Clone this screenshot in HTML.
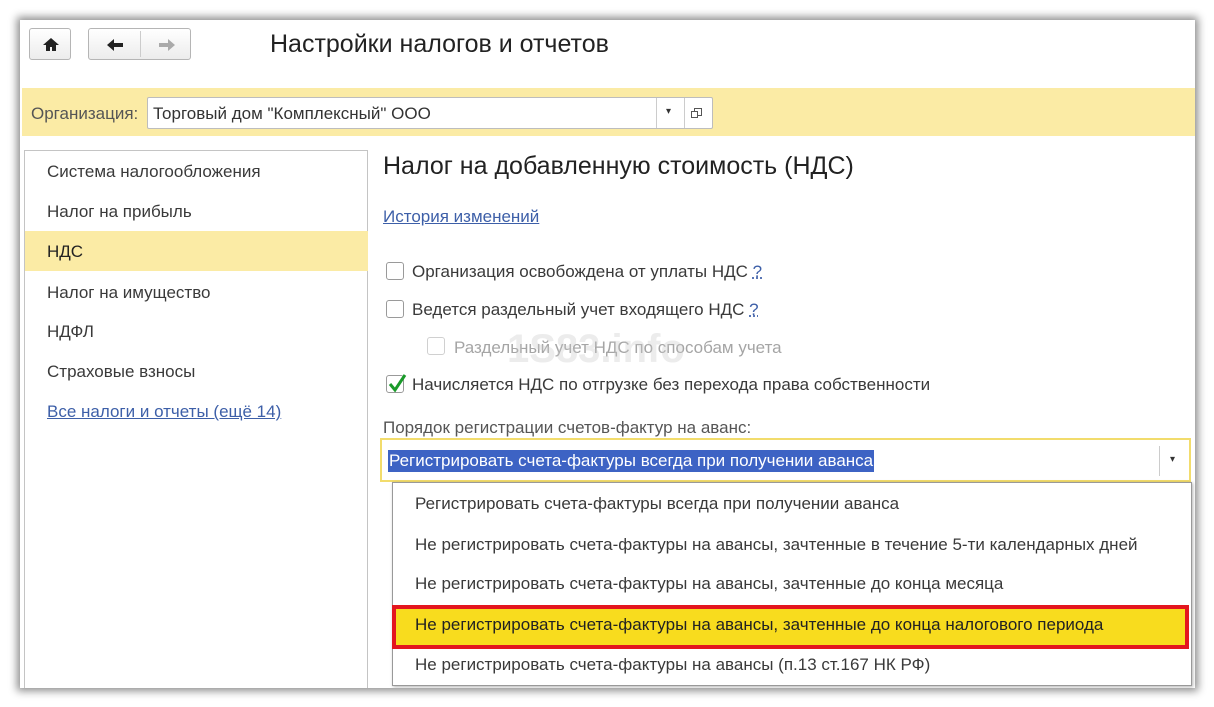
<!DOCTYPE html>
<html><head><meta charset="utf-8">
<style>
*{margin:0;padding:0;box-sizing:border-box}
body{width:1214px;height:707px;background:#fff;font-family:"Liberation Sans",Arial,sans-serif;position:relative;overflow:hidden;color:#333}
.win{position:absolute;left:20px;top:20px;width:1175px;height:668px;background:#fff;box-shadow:0 0 8px 3px rgba(0,0,0,.45);overflow:hidden}
.a{position:absolute;white-space:nowrap}
.btn{position:absolute;border:1px solid #b5b5b5;border-radius:3px;background:linear-gradient(#fff,#ececec)}
.t{font-size:17px;color:#3a3a3a}
.cb{position:absolute;width:18px;height:18px;border:1px solid #9a9a9a;border-radius:3px;background:#fff}
.lnk{color:#3d5fa8;text-decoration:underline}
</style></head><body>
<div class="win">
 <div class="btn" style="left:9px;top:8px;width:42px;height:32px"><svg width="42" height="32" viewBox="0 0 42 32"><path d="M21 9 L13 16 H16 V22 H20 V18 H22 V22 H26 V16 H29 Z" fill="#222"/></svg></div>
 <div class="btn" style="left:68px;top:8px;width:103px;height:32px"><div style="position:absolute;left:51px;top:2px;width:1px;height:26px;background:#ccc"></div>
  <svg width="103" height="32" viewBox="0 0 103 32"><path d="M18 16 L25 10 V14 H34 V18 H25 V22 Z" fill="#222"/><path d="M86 16 L79 10 V14 H70 V18 H79 V22 Z" fill="#aaa"/></svg></div>
 <div class="a" style="left:250px;top:10px;font-size:25px;color:#222">Настройки налогов и отчетов</div>
 <div style="position:absolute;left:2px;top:68px;width:1173px;height:48px;background:#fbeba5"></div>
 <div class="a t" style="left:11px;top:84px;color:#555">Организация:</div>
 <div style="position:absolute;left:127px;top:77px;width:566px;height:32px;background:#fff;border:1px solid #bdbdbd;border-radius:2px">
  <div class="a t" style="left:5px;top:6px;color:#333">Торговый дом "Комплексный" ООО</div>
  <div style="position:absolute;left:508px;top:0;width:1px;height:30px;background:#ccc"></div>
  <div style="position:absolute;left:536px;top:0;width:1px;height:30px;background:#ccc"></div>
  <div class="a" style="left:518px;top:8px;font-size:10px">▾</div>
  <div style="position:absolute;left:546px;top:10px;width:8px;height:8px;border:1px solid #555"></div>
  <div style="position:absolute;left:543px;top:13px;width:7px;height:7px;border:1px solid #555;background:#fff"></div>
 </div>
 <div style="position:absolute;left:4px;top:130px;width:344px;height:545px;border:1px solid #c4c4c4"></div>
 <div style="position:absolute;left:5px;top:211px;width:343px;height:40px;background:#fbeba5"></div>
 <div class="a t" style="left:27px;top:142px">Система налогообложения</div>
 <div class="a t" style="left:27px;top:182px">Налог на прибыль</div>
 <div class="a t" style="left:27px;top:222px;color:#222">НДС</div>
 <div class="a t" style="left:27px;top:263px">Налог на имущество</div>
 <div class="a t" style="left:27px;top:302px">НДФЛ</div>
 <div class="a t" style="left:27px;top:342px">Страховые взносы</div>
 <div class="a t lnk" style="left:27px;top:382px">Все налоги и отчеты (ещё 14)</div>
 <div class="a" style="left:363px;top:132px;font-size:25px;color:#222">Налог на добавленную стоимость (НДС)</div>
 <div class="a t lnk" style="left:363px;top:187px">История изменений</div>
 <div class="cb" style="left:366px;top:242px"></div><div class="a t" style="left:392px;top:242px">Организация освобождена от уплаты НДС <span class="lnk" style="text-decoration:underline dotted">?</span></div>
 <div class="cb" style="left:366px;top:280px"></div><div class="a t" style="left:392px;top:280px">Ведется раздельный учет входящего НДС <span class="lnk" style="text-decoration:underline dotted">?</span></div>
 <div class="cb" style="left:407px;top:317px;border-color:#d0d0d0"></div><div class="a t" style="left:434px;top:318px;color:#a5a5a5">Раздельный учет НДС по способам учета</div>
 <div class="a" style="left:487px;top:307px;font-size:40px;font-weight:bold;color:rgba(200,200,200,.35)">1S83.info</div>
 <div class="cb" style="left:366px;top:355px"></div><svg class="a" style="left:366px;top:352px" width="22" height="22"><path d="M4 12 L9 18 L19 3" stroke="#1a9a2a" stroke-width="3" fill="none"/></svg>
 <div class="a t" style="left:392px;top:355px">Начисляется НДС по отгрузке без перехода права собственности</div>
 <div class="a t" style="left:363px;top:398px;color:#555">Порядок регистрации счетов-фактур на аванс:</div>
 <div style="position:absolute;left:360px;top:418px;width:811px;height:44px;border:2px solid #f2dc6c;background:#fff">
  <div class="a t" style="left:6px;top:10px;background:#3d63c4;color:#fff;padding:1px 1px">Регистрировать счета-фактуры всегда при получении аванса</div>
  <div style="position:absolute;left:777px;top:6px;width:1px;height:30px;background:#ccc"></div>
  <div class="a" style="left:788px;top:14px;font-size:10px">▾</div>
 </div>
 <div style="position:absolute;left:372px;top:462px;width:800px;height:204px;border:1px solid #999;background:#fff;box-shadow:1px 1px 3px rgba(0,0,0,.3)"></div>
 <div class="a t" style="left:395px;top:474px">Регистрировать счета-фактуры всегда при получении аванса</div>
 <div class="a t" style="left:395px;top:515px">Не регистрировать счета-фактуры на авансы, зачтенные в течение 5-ти календарных дней</div>
 <div class="a t" style="left:395px;top:554px">Не регистрировать счета-фактуры на авансы, зачтенные до конца месяца</div>
 <div style="position:absolute;left:372px;top:585px;width:797px;height:44px;border:4px solid #e3161e;background:#f8dc1e"></div>
 <div class="a t" style="left:395px;top:595px;color:#222">Не регистрировать счета-фактуры на авансы, зачтенные до конца налогового периода</div>
 <div class="a t" style="left:395px;top:635px">Не регистрировать счета-фактуры на авансы (п.13 ст.167 НК РФ)</div>
</div>
</body></html>
